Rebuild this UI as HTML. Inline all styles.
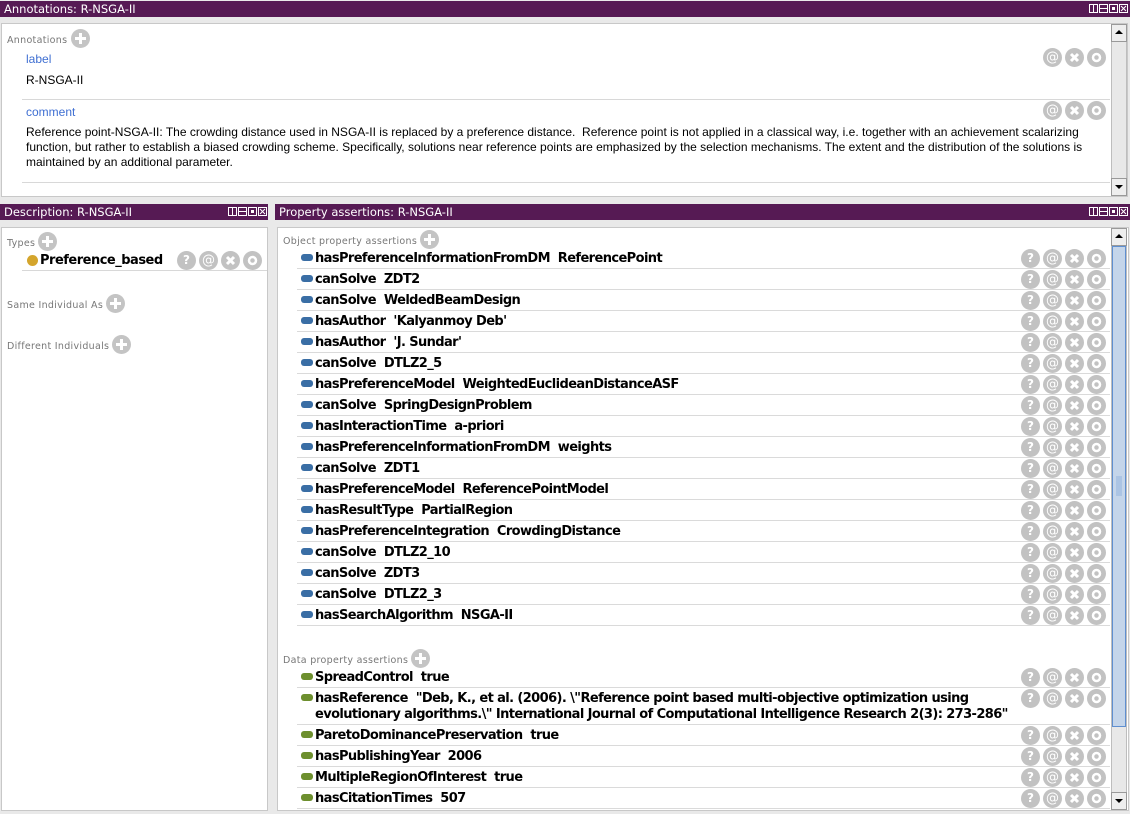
<!DOCTYPE html>
<html><head><meta charset="utf-8">
<style>
*{box-sizing:border-box;margin:0;padding:0}
body{width:1130px;height:812px;background:#e9e9e9;position:relative;overflow:hidden;font-family:"Liberation Sans",Arial,sans-serif}
.a{position:absolute}
.tb{position:absolute;height:16px;background:#561a54;color:#fff;font-family:"DejaVu Sans",sans-serif;font-size:11.5px;line-height:16px;padding-left:4px;white-space:nowrap}
.ic{position:absolute;height:9px;display:flex;gap:1px}
.ic i{display:block;width:9px;height:9px;border:1px solid #fff;position:relative}
.ic i.v:after{content:"";position:absolute;left:3px;top:0;width:1px;height:7px;background:#fff}
.ic i.h:after{content:"";position:absolute;left:0;top:3px;height:1px;width:7px;background:#fff}
.ic i.s:after{content:"";position:absolute;left:2px;top:2px;width:3px;height:3px;background:#fff}
.ic i.x:before{content:"";position:absolute;left:3px;top:0px;width:1px;height:7px;background:#fff;transform:rotate(45deg)}
.ic i.x:after{content:"";position:absolute;left:3px;top:0px;width:1px;height:7px;background:#fff;transform:rotate(-45deg)}
.pn{position:absolute;background:#fff;border:1px solid #c8c8c8}
.sec{position:absolute;font-family:"DejaVu Sans",sans-serif;font-size:9.5px;color:#777;letter-spacing:.3px;white-space:nowrap}
.plus{display:inline-block;width:19px;height:19px;border-radius:50%;background:#c4c4c4;vertical-align:middle;position:relative;margin-left:2px;top:-2px}
.plus:before{content:"";position:absolute;left:4px;top:8px;width:11px;height:3px;background:#fff}
.plus:after{content:"";position:absolute;left:8px;top:4px;width:3px;height:11px;background:#fff}
.r{position:absolute;left:301px;height:16px;font-weight:bold;font-size:13px;line-height:16px;color:#000;white-space:nowrap;font-family:"DejaVu Sans",sans-serif;letter-spacing:-.6px}
.r i{display:inline-block;width:12px;height:7px;border-radius:3px;background:#3a6ea5;margin-right:2px;vertical-align:1px}
.r i.g{background:#6d8f2e}
.ln{position:absolute;left:297px;width:813px;height:1px;background:#dadada}
.bs{position:absolute;display:flex;gap:3px}
.bs b{display:block;width:19px;height:19px;border-radius:50%;background:#c2c2c2;color:#fff;font:bold 12px/19px "DejaVu Sans",sans-serif;text-align:center}
.bs b.at{font-weight:normal;font-size:13px}
.bs b svg{display:block}
.sb{position:absolute;background:#e8e8e8;border:1px solid #bdbdbd}
.arr{position:absolute;width:16px;height:16px;background:#eee;border:1px solid #999}
.thumb{position:absolute;background:#c4d5ea;border:1px solid #5f8fd0}
.blue{color:#3f6fd2;font-size:12px}
</style></head><body>

<div class="tb" style="left:0;top:1px;width:1130px">Annotations: R-NSGA-II</div>
<div class="ic" style="left:1089px;top:4px"><i class="v"></i><i class="h"></i><i class="s"></i><i class="x"></i></div>
<div class="pn" style="left:1px;top:23px;width:1127px;height:174px"></div>
<div class="sec" style="left:7px;top:31px">Annotations<span class="plus" style="margin-left:4px"></span></div>
<div class="a blue" style="left:26px;top:52px">label</div>
<div class="a" style="left:26px;top:73px;font-size:12px">R-NSGA-II</div>
<div class="a" style="left:22px;top:99px;width:1088px;height:1px;background:#d8d8d8"></div>
<div class="a blue" style="left:26px;top:105px">comment</div>
<div class="a" style="left:26px;top:125px;width:1082px;font-size:12px;line-height:15px">Reference point-NSGA-II: The crowding distance used in NSGA-II is replaced by a preference distance.&nbsp; Reference point is not applied in a classical way, i.e. together with an achievement scalarizing function, but rather to establish a biased crowding scheme. Specifically, solutions near reference points are emphasized by the selection mechanisms. The extent and the distribution of the solutions is maintained by an additional parameter.</div>
<div class="a" style="left:22px;top:182px;width:1088px;height:1px;background:#d8d8d8"></div>
<div class="bs" style="left:1043px;top:48px"><b class="at">@</b><b><svg width="19" height="19"><path d="M6 6L13 13M13 6L6 13" stroke="#fff" stroke-width="3"/></svg></b><b><svg width="19" height="19"><circle cx="9.5" cy="9.5" r="3.5" fill="none" stroke="#fff" stroke-width="2.5"/></svg></b></div>
<div class="bs" style="left:1043px;top:101px"><b class="at">@</b><b><svg width="19" height="19"><path d="M6 6L13 13M13 6L6 13" stroke="#fff" stroke-width="3"/></svg></b><b><svg width="19" height="19"><circle cx="9.5" cy="9.5" r="3.5" fill="none" stroke="#fff" stroke-width="2.5"/></svg></b></div>
<div class="sb" style="left:1111px;top:24px;width:16px;height:172px"></div>
<div class="arr" style="left:1111px;top:24px;height:18px"><svg width="14" height="14"><path d="M3 9L7 5L11 9Z" fill="#000"/></svg></div>
<div class="arr" style="left:1111px;top:178px;height:18px"><svg width="14" height="16"><path d="M3 6L7 10L11 6Z" fill="#000"/></svg></div>

<div class="tb" style="left:0;top:204px;width:268px">Description: R-NSGA-II</div>
<div class="ic" style="left:228px;top:207px"><i class="v"></i><i class="h"></i><i class="s"></i><i class="x"></i></div>
<div class="pn" style="left:1px;top:227px;width:267px;height:584px"></div>
<div class="sec" style="left:7px;top:234px">Types<span class="plus" style="margin-left:3px"></span></div>
<div class="a" style="left:27px;top:255px;width:11px;height:11px;border-radius:50%;background:#d4a52c"></div>
<div class="a" style="left:40px;top:253px;font:bold 13px/16px 'DejaVu Sans',sans-serif;letter-spacing:-.5px">Preference_based</div>
<div class="a" style="left:22px;top:270px;width:245px;height:1px;background:#d8d8d8"></div>
<div class="bs" style="left:177px;top:251px"><b>?</b><b class="at">@</b><b><svg width="19" height="19"><path d="M6 6L13 13M13 6L6 13" stroke="#fff" stroke-width="3"/></svg></b><b><svg width="19" height="19"><circle cx="9.5" cy="9.5" r="3.5" fill="none" stroke="#fff" stroke-width="2.5"/></svg></b></div>
<div class="sec" style="left:7px;top:296px">Same Individual As<span class="plus" style="margin-left:3px"></span></div>
<div class="sec" style="left:7px;top:337px">Different Individuals<span class="plus" style="margin-left:3px"></span></div>

<div class="tb" style="left:275px;top:204px;width:855px">Property assertions: R-NSGA-II</div>
<div class="ic" style="left:1089px;top:207px"><i class="v"></i><i class="h"></i><i class="s"></i><i class="x"></i></div>
<div class="pn" style="left:277px;top:227px;width:852px;height:584px"></div>
<div class="sec" style="left:283px;top:232px">Object property assertions<span class="plus" style="margin-left:3px"></span></div>

<div class="r" style="top:251px"><i></i>hasPreferenceInformationFromDM&nbsp; ReferencePoint</div>
<div class="r" style="top:272px"><i></i>canSolve&nbsp; ZDT2</div>
<div class="r" style="top:293px"><i></i>canSolve&nbsp; WeldedBeamDesign</div>
<div class="r" style="top:314px"><i></i>hasAuthor&nbsp; 'Kalyanmoy Deb'</div>
<div class="r" style="top:335px"><i></i>hasAuthor&nbsp; 'J. Sundar'</div>
<div class="r" style="top:356px"><i></i>canSolve&nbsp; DTLZ2_5</div>
<div class="r" style="top:377px"><i></i>hasPreferenceModel&nbsp; WeightedEuclideanDistanceASF</div>
<div class="r" style="top:398px"><i></i>canSolve&nbsp; SpringDesignProblem</div>
<div class="r" style="top:419px"><i></i>hasInteractionTime&nbsp; a-priori</div>
<div class="r" style="top:440px"><i></i>hasPreferenceInformationFromDM&nbsp; weights</div>
<div class="r" style="top:461px"><i></i>canSolve&nbsp; ZDT1</div>
<div class="r" style="top:482px"><i></i>hasPreferenceModel&nbsp; ReferencePointModel</div>
<div class="r" style="top:503px"><i></i>hasResultType&nbsp; PartialRegion</div>
<div class="r" style="top:524px"><i></i>hasPreferenceIntegration&nbsp; CrowdingDistance</div>
<div class="r" style="top:545px"><i></i>canSolve&nbsp; DTLZ2_10</div>
<div class="r" style="top:566px"><i></i>canSolve&nbsp; ZDT3</div>
<div class="r" style="top:587px"><i></i>canSolve&nbsp; DTLZ2_3</div>
<div class="r" style="top:608px"><i></i>hasSearchAlgorithm&nbsp; NSGA-II</div>

<div class="ln" style="top:268px"></div><div class="ln" style="top:289px"></div><div class="ln" style="top:310px"></div><div class="ln" style="top:331px"></div><div class="ln" style="top:352px"></div><div class="ln" style="top:373px"></div><div class="ln" style="top:394px"></div><div class="ln" style="top:415px"></div><div class="ln" style="top:436px"></div><div class="ln" style="top:457px"></div><div class="ln" style="top:478px"></div><div class="ln" style="top:499px"></div><div class="ln" style="top:520px"></div><div class="ln" style="top:541px"></div><div class="ln" style="top:562px"></div><div class="ln" style="top:583px"></div><div class="ln" style="top:604px"></div><div class="ln" style="top:625px"></div>

<div class="sec" style="left:283px;top:651px">Data property assertions<span class="plus" style="margin-left:3px"></span></div>
<div class="r" style="top:670px"><i class="g"></i>SpreadControl&nbsp; true</div>
<div class="r" style="top:691px;line-height:16px"><i class="g"></i>hasReference&nbsp; "Deb, K., et al. (2006). \"Reference point based multi-objective optimization using<br><span style="padding-left:14px">evolutionary algorithms.\" International Journal of Computational Intelligence Research 2(3): 273-286"</span></div>
<div class="r" style="top:728px"><i class="g"></i>ParetoDominancePreservation&nbsp; true</div>
<div class="r" style="top:749px"><i class="g"></i>hasPublishingYear&nbsp; 2006</div>
<div class="r" style="top:770px"><i class="g"></i>MultipleRegionOfInterest&nbsp; true</div>
<div class="r" style="top:791px"><i class="g"></i>hasCitationTimes&nbsp; 507</div>
<div class="ln" style="top:687px"></div><div class="ln" style="top:724px"></div><div class="ln" style="top:745px"></div><div class="ln" style="top:766px"></div><div class="ln" style="top:787px"></div><div class="ln" style="top:808px"></div>

<div id="btns"></div>
<div class="bs" style="left:1021px;top:249px"><b>?</b><b class="at">@</b><b><svg width="19" height="19"><path d="M6 6L13 13M13 6L6 13" stroke="#fff" stroke-width="3"/></svg></b><b><svg width="19" height="19"><circle cx="9.5" cy="9.5" r="3.5" fill="none" stroke="#fff" stroke-width="2.5"/></svg></b></div>
<script>
(function(){
var ys=[];for(var i=1;i<18;i++)ys.push(249+21*i);ys=ys.concat([668,689,726,747,768,789]);
var h='';var x='<svg width="19" height="19"><path d="M6 6L13 13M13 6L6 13" stroke="#fff" stroke-width="3"/></svg>',o='<svg width="19" height="19"><circle cx="9.5" cy="9.5" r="3.5" fill="none" stroke="#fff" stroke-width="2.5"/></svg>';
ys.forEach(function(y){h+='<div class="bs" style="left:1021px;top:'+y+'px"><b>?</b><b class="at">@</b><b>'+x+'</b><b>'+o+'</b></div>';});
document.getElementById('btns').innerHTML=h;})();
</script>

<div class="sb" style="left:1111px;top:228px;width:16px;height:582px"></div>
<div class="arr" style="left:1111px;top:228px;height:18px"><svg width="14" height="14"><path d="M3 9L7 5L11 9Z" fill="#000"/></svg></div>
<div class="thumb" style="left:1112px;top:246px;width:14px;height:481px"></div>
<div class="a" style="left:1116px;top:476px;width:6px;height:20px;background-image:radial-gradient(#5f8fd0 40%,transparent 45%);background-size:2px 2px"></div>
<div class="arr" style="left:1111px;top:792px;height:18px"><svg width="14" height="16"><path d="M3 6L7 10L11 6Z" fill="#000"/></svg></div>
</body></html>
